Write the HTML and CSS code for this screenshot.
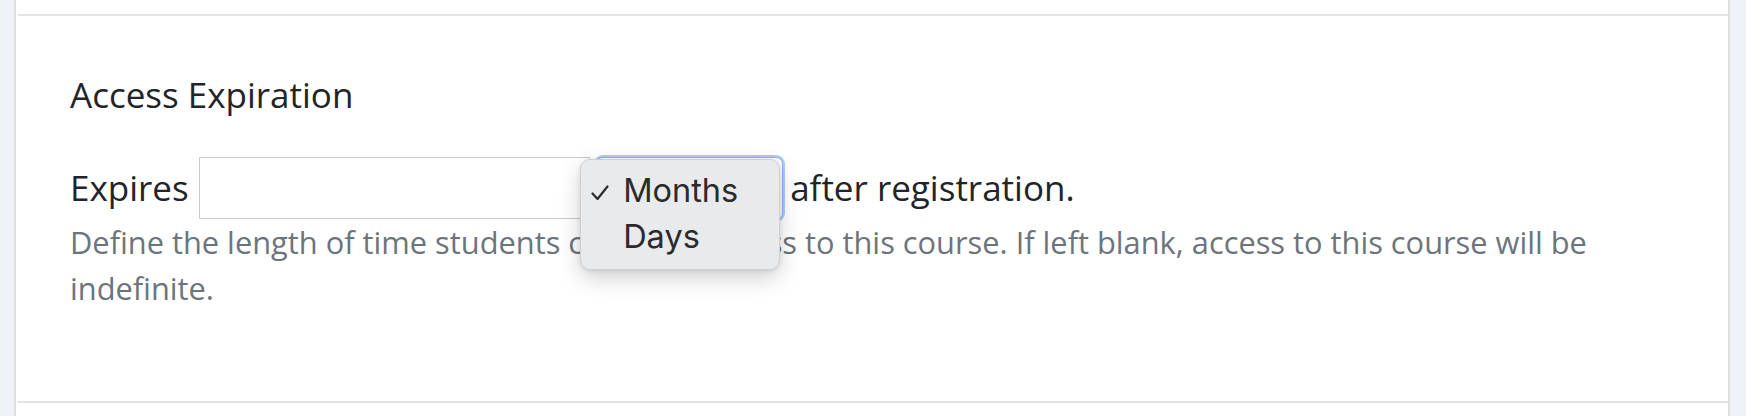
FILE: index.html
```html
<!DOCTYPE html>
<html lang="en">
<head>
    <meta charset="UTF-8">
    <meta name="viewport" content="width=device-width, initial-scale=1.0">
    <title>Course Settings</title>
    <link rel="stylesheet" href="styles.css">
</head>
<body>
    <div class="shell">
        <section class="card">
            <h3 class="card-title">Access Expiration</h3>

            <div class="expiry-row">
                <label for="expires-value">Expires</label>
                <input type="text" id="expires-value">
                <div class="select-wrap">
                    <select id="expires-unit" class="unit-select">
                        <option selected>Months</option>
                        <option>Days</option>
                    </select>
                    <ul class="select-menu">
                        <li class="selected">
                            <svg class="check" viewBox="0 0 18 16" width="18" height="16">
                                <polyline points="1.5,8.5 6.5,14 16.5,1.5" fill="none" stroke="#2b2b2b" stroke-width="2.2" stroke-linecap="round" stroke-linejoin="round"/>
                            </svg>
                            <span>Months</span>
                        </li>
                        <li><span>Days</span></li>
                    </ul>
                </div>
                <span class="after">after registration.</span>
            </div>

            <p class="form-text">Define the length of time students can have access to this course. If left blank, access to this course will be indefinite.</p>
        </section>
    </div>
</body>
</html>
```

FILE: styles.css
```css
body {
    margin: 0;
    font-family: "Open Sans", "Noto Sans", sans-serif;
    background-color: #eff3f7;
    color: #212529;
}

.shell {
    margin: 0 16px 0 14px;
    padding-top: 14px;
    min-height: 100vh;
    box-sizing: border-box;
    background-color: #fff;
    border-left: 2px solid #dfdfdf;
    border-right: 2px solid #dfdfdf;
}

.card {
    margin-left: 2px;
    padding: 57.5px 52px 89.5px;
    border-top: 2px solid #e4e4e4;
    border-bottom: 2px solid #e4e4e4;
}

.card-title {
    margin: 0 0 41px;
    font-size: 35px;
    font-weight: 400;
    line-height: 1.2;
}

.expiry-row {
    display: flex;
    align-items: center;
    font-size: 35px;
    line-height: 1.5;
}

.expiry-row label {
    margin-right: 10.5px;
}

.expiry-row input {
    width: 391px;
    height: 62px;
    margin-right: 6px;
    box-sizing: border-box;
    border: 1px solid #c9c9c9;
    border-radius: 0;
    font: inherit;
}

.select-wrap {
    position: relative;
    margin-right: 7px;
}

.unit-select {
    display: block;
    width: 187px;
    height: 63px;
    box-sizing: border-box;
    appearance: none;
    background-color: #fff;
    border: 1px solid #86b7fe;
    border-radius: 7px;
    box-shadow: 0 0 0 2px rgba(13, 110, 253, 0.35);
    font: inherit;
    color: transparent;
}

.select-menu {
    position: absolute;
    left: -16px;
    top: 2px;
    width: 200px;
    height: 111px;
    box-sizing: border-box;
    margin: 0;
    padding: 8.8px 0 0;
    list-style: none;
    background-color: #e9eaec;
    border: 1px solid #cfd0d2;
    border-radius: 10px;
    box-shadow: 0 8px 22px rgba(0, 0, 0, 0.18), 0 1px 4px rgba(0, 0, 0, 0.1);
    font-family: Inter, "Liberation Sans", sans-serif;
    font-size: 32.5px;
    line-height: 46px;
    color: #2b2b2b;
}

.select-menu li {
    position: relative;
    padding-left: 42px;
}

.check {
    position: absolute;
    left: 10px;
    top: 17px;
}

.form-text {
    margin: -0.5px 0 0;
    font-size: 30.8px;
    line-height: 1.5;
    color: #6c757d;
}
```
